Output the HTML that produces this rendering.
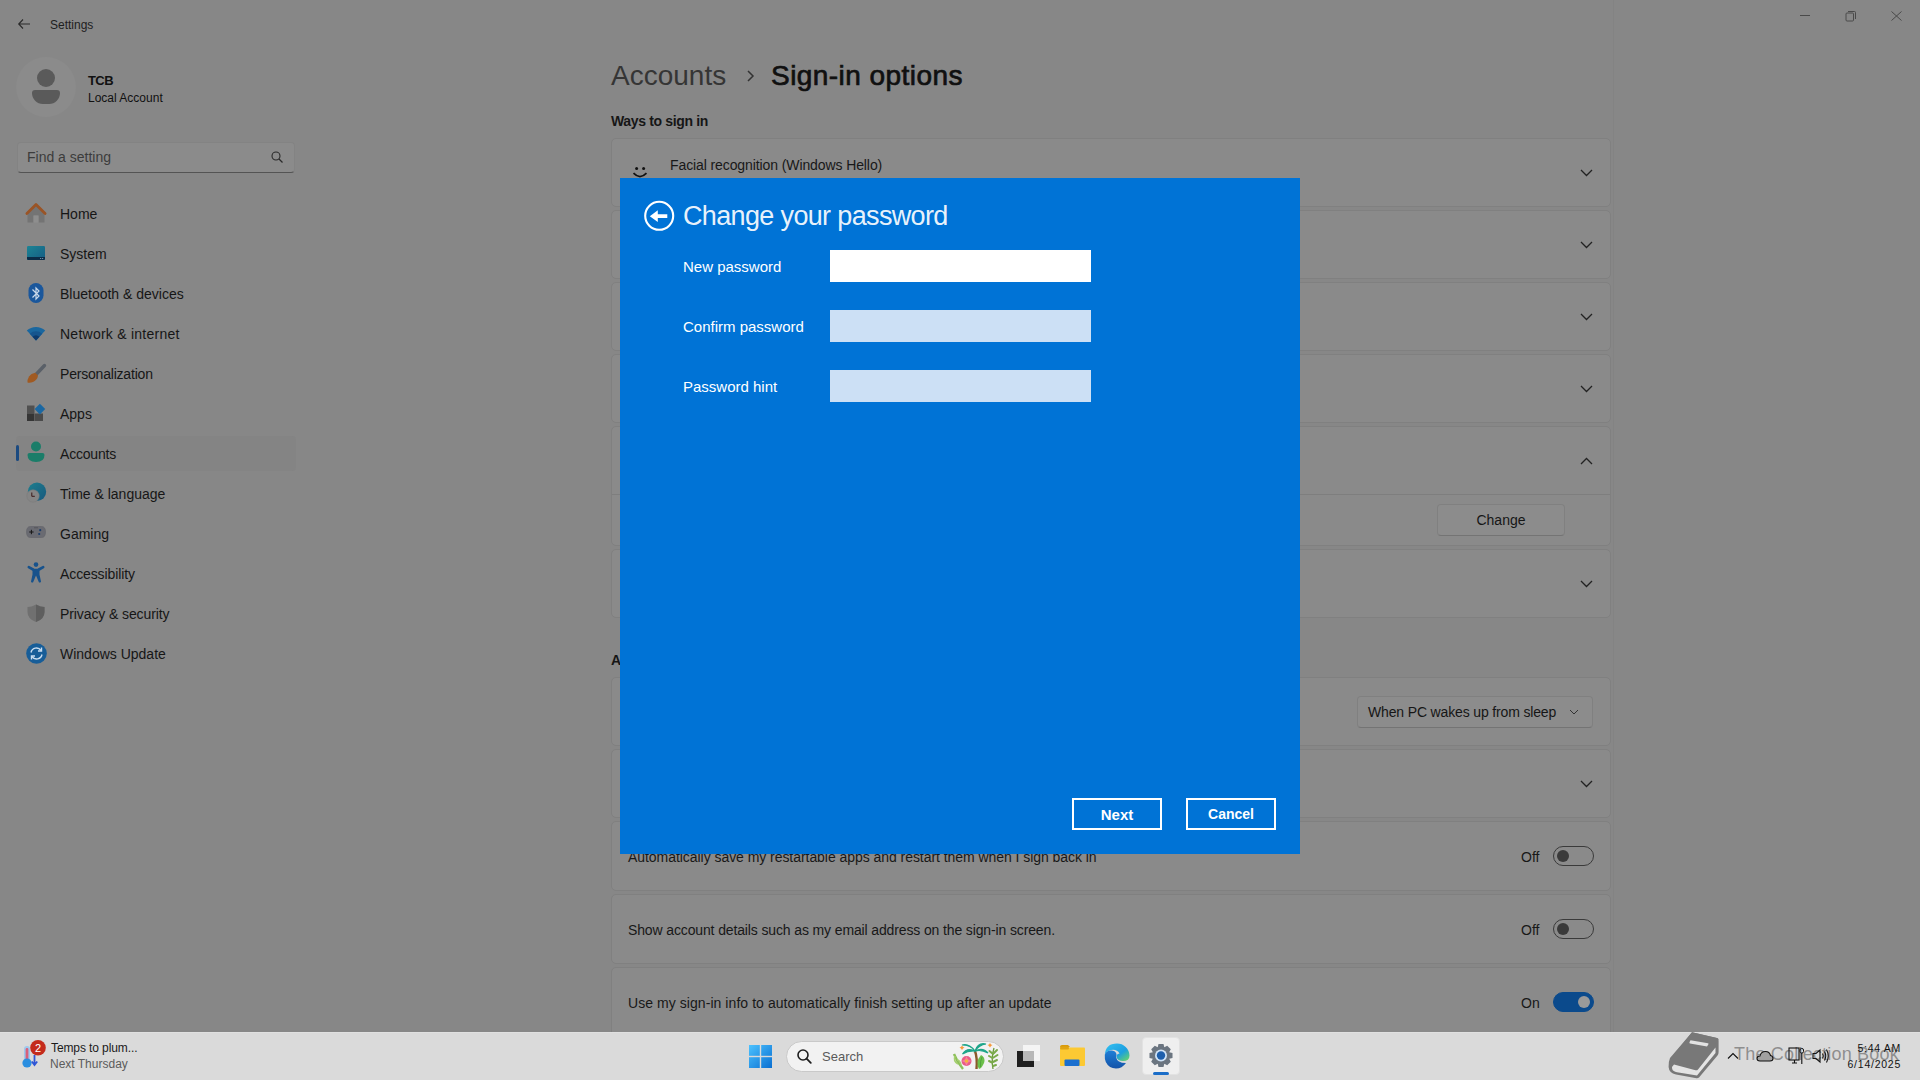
<!DOCTYPE html>
<html><head><meta charset="utf-8">
<style>
*{margin:0;padding:0;box-sizing:border-box}
html,body{width:1920px;height:1080px;overflow:hidden}
body{background:#878787;font-family:"Liberation Sans",sans-serif;color:#1a1a1a;position:relative}
.a{position:absolute;white-space:nowrap}
svg.a{overflow:visible}
.nav{position:absolute;left:60px;font-size:14px;color:#161616;white-space:nowrap}
.card{position:absolute;left:611px;width:1000px;background:#8a8a8a;border:1px solid #808080;border-radius:5px}
.ctext{position:absolute;left:628px;font-size:14px;color:#181818;white-space:nowrap}
.tog{position:absolute;left:1553px;width:41px;height:20px;border-radius:10px;border:1px solid #3a3a3a}
.tog i{position:absolute;left:3px;top:3px;width:12px;height:12px;border-radius:6px;background:#3a3a3a}
.offt{position:absolute;left:1521px;font-size:14px;color:#181818}
#dlg{position:absolute;left:620px;top:178px;width:680px;height:676px;background:#0073d6}
.lbl{position:absolute;left:63px;font-size:15px;color:#fff;white-space:nowrap}
.inp{position:absolute;left:210px;width:261px;height:32px;background:#cce0f5}
.btn{position:absolute;top:620px;width:90px;height:32px;border:2px solid #fff;color:#fff;font-size:15px;font-weight:bold;text-align:center;line-height:29.5px}
#tb{position:absolute;left:0;top:1032px;width:1920px;height:48px;background:#dadada;border-top:1px solid #e0e0e0}
</style></head><body>
<!-- title bar -->
<svg class="a" style="left:18px;top:19px" width="12" height="10" viewBox="0 0 12 10"><path d="M5 0.5L0.7 5L5 9.5M0.7 5H12" stroke="#2a2a2a" stroke-width="1.1" fill="none"/></svg>
<div class="a" style="left:50px;top:18px;font-size:12px;color:#1e1e1e">Settings</div>
<div class="a" style="left:1800px;top:15px;width:10px;height:1px;background:#4a4a4a"></div>
<svg class="a" style="left:1845px;top:10px" width="12" height="12"><rect x="1" y="3" width="7.5" height="8" rx="1" stroke="#4a4a4a" stroke-width="1" fill="none"/><path d="M3 1.5H9.5Q10.5 1.5 10.5 2.5V9" stroke="#4a4a4a" stroke-width="1" fill="none"/></svg>
<svg class="a" style="left:1891px;top:11px" width="11" height="10"><path d="M0.5 0.5L10.5 9.5M10.5 0.5L0.5 9.5" stroke="#4a4a4a" stroke-width="1" fill="none"/></svg>

<!-- profile -->
<div class="a" style="left:16px;top:57px;width:60px;height:60px;border-radius:30px;background:#8b8b8b"></div>
<div class="a" style="left:37px;top:69px;width:18px;height:18px;border-radius:9px;background:#5a5a5a"></div>
<div class="a" style="left:32px;top:90px;width:28px;height:14px;border-radius:4px 4px 14px 14px;background:#5a5a5a"></div>
<div class="a" style="left:88px;top:73px;font-size:13px;font-weight:bold;color:#111;letter-spacing:-0.6px">TCB</div>
<div class="a" style="left:88px;top:91px;font-size:12px;color:#111">Local Account</div>

<!-- search -->
<div class="a" style="left:17px;top:142px;width:278px;height:31px;background:#8b8b8b;border:1px solid #838383;border-bottom:1px solid #545454;border-radius:4px"></div>
<div class="a" style="left:27px;top:149px;font-size:14px;color:#3c3c3c">Find a setting</div>
<svg class="a" style="left:271px;top:151px" width="12" height="12"><circle cx="5" cy="5" r="4" stroke="#2a2a2a" stroke-width="1.1" fill="none"/><path d="M8 8L11.5 11.5" stroke="#2a2a2a" stroke-width="1.2"/></svg>

<!-- nav -->
<div class="a" style="left:16px;top:436px;width:280px;height:35px;background:#848484;border-radius:4px"></div>
<div class="a" style="left:16px;top:445px;width:3px;height:16px;background:#1b4a80;border-radius:2px"></div>
<!-- icons -->
<svg class="a" style="left:26px;top:202px" width="20" height="21" viewBox="0 0 20 21"><path d="M1.5 11L10 3.5L18.5 11V20.5H12.5V13.5H7.5V20.5H1.5Z" fill="#747474"/><path d="M7.5 13.5H12.5V20.5H7.5Z" fill="#8e8e8e"/><path d="M0.9 11.6L10 2.6L19.1 11.6" stroke="#9a5426" stroke-width="2.8" fill="none" stroke-linejoin="round" stroke-linecap="round"/></svg>
<svg class="a" style="left:27px;top:246px" width="18" height="14" viewBox="0 0 18 14"><defs><linearGradient id="sg" x1="0" y1="0" x2="1" y2="1"><stop offset="0" stop-color="#1c8494"/><stop offset="1" stop-color="#155c84"/></linearGradient></defs><rect x="0" y="0" width="18" height="14" rx="1.2" fill="url(#sg)"/><path d="M0 11H18V12.8Q18 14 16.8 14H1.2Q0 14 0 12.8Z" fill="#0b2c48"/><rect x="13" y="12" width="1.2" height="0.9" fill="#7a9ab0"/><rect x="15" y="12" width="1.2" height="0.9" fill="#7a9ab0"/></svg>
<svg class="a" style="left:28px;top:283px" width="16" height="21" viewBox="0 0 16 21"><rect x="0.5" y="0" width="15" height="20" rx="7.5" fill="#1a579c"/><path d="M4.5 6.5L11 13L8 16V5L11 8L4.5 14.5" stroke="#c8d8ea" stroke-width="1.2" fill="none"/></svg>
<svg class="a" style="left:26px;top:326px" width="20" height="15" viewBox="0 0 20 15"><path d="M0.8 4.5A13.5 13.5 0 0 1 19.2 4.5L10 14.5Z" fill="#1a679f"/><path d="M3.8 7.8A9 9 0 0 1 16.2 7.8L10 14.5Z" fill="#16558e"/><path d="M6.5 10.8A5.2 5.2 0 0 1 13.5 10.8L10 14.5Z" fill="#0e3a6c"/></svg>
<svg class="a" style="left:26px;top:363px" width="20" height="21" viewBox="0 0 20 21"><path d="M18.5 2.5L10 11.5" stroke="#5a6068" stroke-width="3.4" stroke-linecap="round"/><path d="M9.2 9.8L12 12.6Q11.5 17 7 19Q4 20.2 1.5 19.5Q1.2 16.5 3 13.5Q5 10.5 9.2 9.8Z" fill="#a05a22"/></svg>
<svg class="a" style="left:27px;top:405px" width="18" height="17" viewBox="0 0 18 17"><rect x="0" y="0.5" width="7.5" height="8" fill="#505050"/><rect x="0" y="8.5" width="7.5" height="7.5" fill="#353535"/><rect x="8" y="8.5" width="8" height="7.5" fill="#4a4a4a"/><path d="M12.9 -1.2L18.2 4.1L12.9 9.4L7.6 4.1Z" fill="#1a67a2"/></svg>
<svg class="a" style="left:27px;top:441px" width="18" height="22" viewBox="0 0 18 22"><circle cx="9" cy="5.5" r="5" fill="#1b7d69"/><path d="M0.5 14Q0.5 12 2.5 12H15.5Q17.5 12 17.5 14Q17.5 21 9 21Q0.5 21 0.5 14Z" fill="#1b7d69"/></svg>
<svg class="a" style="left:26px;top:482px" width="20" height="21" viewBox="0 0 20 21"><defs><linearGradient id="tg" x1="0" y1="0" x2="1" y2="1"><stop offset="0" stop-color="#1d7f8e"/><stop offset="1" stop-color="#19587e"/></linearGradient></defs><circle cx="11" cy="9.8" r="9.2" fill="url(#tg)"/><circle cx="7" cy="14" r="6.2" fill="#858585" stroke="#7a7a7a" stroke-width="0.6"/><path d="M5.8 10.5V14.3H8.8" stroke="#3a1818" stroke-width="1" fill="none"/></svg>
<svg class="a" style="left:26px;top:525px" width="20" height="14" viewBox="0 0 20 14"><path d="M4.5 1.5H15.5Q19.5 1.5 19.5 7Q19.5 12.5 15.5 12.5H4.5Q0.5 12.5 0.5 7Q0.5 1.5 4.5 1.5Z" fill="#6a6b72" stroke="#626268" stroke-width="0.6"/><path d="M3.2 7H7.6M5.4 4.8V9.2" stroke="#161616" stroke-width="1"/><circle cx="14.2" cy="5.2" r="1.1" fill="#1c3d6a"/><circle cx="13.2" cy="9" r="1.1" fill="#1c3d6a"/><circle cx="9" cy="2.8" r="0.5" fill="#333"/><circle cx="11" cy="2.8" r="0.5" fill="#333"/></svg>
<svg class="a" style="left:27px;top:562px" width="18" height="21" viewBox="0 0 18 21"><circle cx="9" cy="2.6" r="2.3" fill="#17528c"/><path d="M1.8 5.2L6 7.5M16.2 5.2L12 7.5" stroke="#17528c" stroke-width="2.6" stroke-linecap="round"/><path d="M5.5 6.8H12.5V12.5L14 19.5Q14 20.5 13 20.5H12L9 13.5L6 20.5H5Q4 20.5 4 19.5L5.5 12.5Z" fill="#17528c"/></svg>
<svg class="a" style="left:27px;top:604px" width="18" height="18" viewBox="0 0 18 18"><path d="M9 0.5Q4.5 3 0.5 3V8Q0.5 15 9 18Q17.5 15 17.5 8V3Q13.5 3 9 0.5Z" fill="#707070"/><path d="M9 0.5V18Q17.5 15 17.5 8V3Q13.5 3 9 0.5Z" fill="#5e5e5e"/></svg>
<svg class="a" style="left:26px;top:643px" width="21" height="21" viewBox="0 0 21 21"><circle cx="10.5" cy="10.5" r="10.3" fill="#175d98"/><path d="M5 9.5A5.5 5.5 0 0 1 15 7.5M16 11.5A5.5 5.5 0 0 1 6 13.5" stroke="#c8dcef" stroke-width="1.4" fill="none"/><path d="M15.5 4.5V8H12" stroke="#c8dcef" stroke-width="1.4" fill="none"/><path d="M5.5 16.5V13H9" stroke="#c8dcef" stroke-width="1.4" fill="none"/></svg>

<div class="nav" style="top:206px">Home</div>
<div class="nav" style="top:246px">System</div>
<div class="nav" style="top:286px">Bluetooth &amp; devices</div>
<div class="nav" style="top:326px;letter-spacing:0.25px">Network &amp; internet</div>
<div class="nav" style="top:366px;letter-spacing:-0.2px">Personalization</div>
<div class="nav" style="top:406px">Apps</div>
<div class="nav" style="top:446px;letter-spacing:-0.2px">Accounts</div>
<div class="nav" style="top:486px">Time &amp; language</div>
<div class="nav" style="top:526px">Gaming</div>
<div class="nav" style="top:566px;letter-spacing:-0.1px">Accessibility</div>
<div class="nav" style="top:606px;letter-spacing:-0.1px">Privacy &amp; security</div>
<div class="nav" style="top:646px">Windows Update</div>

<!-- main header -->
<div class="a" style="left:611px;top:60px;font-size:28px;color:#353535">Accounts</div>
<svg class="a" style="left:746px;top:70px" width="9" height="12"><path d="M2 1L7 6L2 11" stroke="#333" stroke-width="1.5" fill="none"/></svg>
<div class="a" style="left:771px;top:60px;font-size:28px;color:#101010;-webkit-text-stroke:0.7px #101010;letter-spacing:0.45px">Sign-in options</div>
<div class="a" style="left:611px;top:113px;font-size:14px;font-weight:bold;color:#161616;letter-spacing:-0.35px">Ways to sign in</div>

<!-- cards -->
<div class="card" style="top:138px;height:69px"></div>
<div class="card" style="top:210px;height:69px"></div>
<div class="card" style="top:282px;height:69px"></div>
<div class="card" style="top:354px;height:69px"></div>
<div class="card" style="top:426px;height:120px"></div>
<div class="a" style="left:612px;top:494px;width:998px;height:1px;background:#7e7e7e"></div>
<div class="card" style="top:549px;height:69px"></div>
<div class="a" style="left:1613px;top:0;width:1px;height:1032px;background:#838383"></div>
<svg class="a" style="left:632px;top:165px" width="16" height="14"><circle cx="4.6" cy="3.4" r="1.5" fill="#111"/><circle cx="11.6" cy="3.4" r="1.5" fill="#111"/><path d="M1.5 8.2Q8 15 14.5 8.2" stroke="#111" stroke-width="1.7" fill="none"/></svg>
<div class="ctext" style="left:670px;top:157px;letter-spacing:-0.1px">Facial recognition (Windows Hello)</div>
<svg class="a" style="left:1580px;top:169px" width="13" height="8"><path d="M1 1L6.5 6.5L12 1" stroke="#222" stroke-width="1.3" fill="none"/></svg>
<svg class="a" style="left:1580px;top:241px" width="13" height="8"><path d="M1 1L6.5 6.5L12 1" stroke="#222" stroke-width="1.3" fill="none"/></svg>
<svg class="a" style="left:1580px;top:313px" width="13" height="8"><path d="M1 1L6.5 6.5L12 1" stroke="#222" stroke-width="1.3" fill="none"/></svg>
<svg class="a" style="left:1580px;top:385px" width="13" height="8"><path d="M1 1L6.5 6.5L12 1" stroke="#222" stroke-width="1.3" fill="none"/></svg>
<svg class="a" style="left:1580px;top:457px" width="13" height="8"><path d="M1 7L6.5 1.5L12 7" stroke="#222" stroke-width="1.3" fill="none"/></svg>
<svg class="a" style="left:1580px;top:580px" width="13" height="8"><path d="M1 1L6.5 6.5L12 1" stroke="#222" stroke-width="1.3" fill="none"/></svg>
<div class="a" style="left:1437px;top:504px;width:128px;height:32px;background:#8c8c8c;border:1px solid #808080;border-bottom-color:#747474;border-radius:4px"></div>
<div class="a" style="left:1437px;top:512px;width:128px;text-align:center;font-size:14px;color:#161616">Change</div>

<div class="a" style="left:611px;top:652px;font-size:14px;font-weight:bold;color:#161616">A</div>
<div class="card" style="top:677px;height:69px"></div>
<div class="card" style="top:749px;height:69px"></div>
<div class="card" style="top:821px;height:70px"></div>
<div class="card" style="top:894px;height:70px"></div>
<div class="card" style="top:967px;height:70px"></div>
<div class="a" style="left:1357px;top:696px;width:236px;height:32px;background:#8c8c8c;border:1px solid #808080;border-bottom-color:#747474;border-radius:4px"></div>
<div class="a" style="left:1368px;top:704px;font-size:14px;color:#161616;letter-spacing:-0.15px">When PC wakes up from sleep</div>
<svg class="a" style="left:1569px;top:709px" width="10" height="6"><path d="M1 1L5 5L9 1" stroke="#333" stroke-width="1" fill="none"/></svg>
<svg class="a" style="left:1580px;top:780px" width="13" height="8"><path d="M1 1L6.5 6.5L12 1" stroke="#222" stroke-width="1.3" fill="none"/></svg>
<div class="ctext" style="top:849px;letter-spacing:-0.05px">Automatically save my restartable apps and restart them when I sign back in</div>
<div class="ctext" style="top:922px;letter-spacing:-0.13px">Show account details such as my email address on the sign-in screen.</div>
<div class="ctext" style="top:995px;letter-spacing:0.06px">Use my sign-in info to automatically finish setting up after an update</div>
<div class="offt" style="top:849px">Off</div>
<div class="offt" style="top:922px">Off</div>
<div class="offt" style="top:995px">On</div>
<div class="tog" style="top:846px"><i></i></div>
<div class="tog" style="top:919px"><i></i></div>
<div class="tog" style="top:992px;background:#0b4a8c;border-color:#0b4a8c"><i style="left:24px;background:#9a9a9a"></i></div>

<!-- dialog -->
<div id="dlg">
  <svg class="a" style="left:23px;top:22px" width="32" height="32" viewBox="0 0 32 32"><circle cx="16.2" cy="15.8" r="14" stroke="#fff" stroke-width="2.1" fill="none"/><path d="M6.8 16.2L14.8 10.3V14.3H24.3V18.1H14.8V22.1Z" fill="#fff"/></svg>
  <div class="a" style="left:63px;top:23px;font-size:27px;color:rgba(255,255,255,0.93);letter-spacing:-0.65px">Change your password</div>
  <div class="lbl" style="top:80px">New password</div>
  <div class="lbl" style="top:140px">Confirm password</div>
  <div class="lbl" style="top:200px">Password hint</div>
  <div class="inp" style="top:72px;background:#fff"></div>
  <div class="inp" style="top:132px"></div>
  <div class="inp" style="top:192px"></div>
  <div class="btn" style="left:452px">Next</div>
  <div class="btn" style="left:566px;font-size:14px">Cancel</div>
</div>

<!-- taskbar -->
<div id="tb"></div>
<!-- widget -->
<svg class="a" style="left:20px;top:1040px" width="28" height="30" viewBox="0 0 28 30"><rect x="4" y="6" width="6" height="17" rx="3" fill="#9dc9ee"/><rect x="5.6" y="8" width="2.8" height="12" rx="1.4" fill="#d9607a"/><circle cx="7" cy="23" r="4.6" fill="#2a8ee0"/><path d="M14.5 15V24M11.8 21.5L14.5 25L17.2 21.5" stroke="#2f55d6" stroke-width="1.8" fill="none"/><circle cx="18" cy="7.8" r="7.8" fill="#c42b1c"/><text x="18" y="12" font-family="Liberation Sans" font-size="11" fill="#fff" text-anchor="middle">2</text></svg>
<div class="a" style="left:51px;top:1041px;font-size:12px;color:#1a1a1a;letter-spacing:-0.1px">Temps to plum...</div>
<div class="a" style="left:50px;top:1057px;font-size:12px;color:#5c5c5c">Next Thursday</div>
<!-- start -->
<svg class="a" style="left:749px;top:1045px" width="23" height="23" viewBox="0 0 23 23"><defs><linearGradient id="wg" gradientUnits="userSpaceOnUse" x1="0" y1="0" x2="23" y2="23"><stop offset="0" stop-color="#4cc2ff"/><stop offset="1" stop-color="#0a6fd1"/></linearGradient></defs><rect x="0" y="0" width="10.8" height="10.8" fill="url(#wg)"/><rect x="12.2" y="0" width="10.8" height="10.8" fill="url(#wg)"/><rect x="0" y="12.2" width="10.8" height="10.8" fill="url(#wg)"/><rect x="12.2" y="12.2" width="10.8" height="10.8" fill="url(#wg)"/></svg>
<!-- search pill -->
<div class="a" style="left:786px;top:1041px;width:218px;height:31px;border-radius:16px;background:#f2f2f2;border:1px solid #c9c9c9"></div>
<svg class="a" style="left:797px;top:1049px" width="15" height="15" viewBox="0 0 15 15"><circle cx="6" cy="6" r="5" stroke="#1e1e1e" stroke-width="1.6" fill="none"/><path d="M9.6 9.6L13.8 13.8" stroke="#1e1e1e" stroke-width="1.8" stroke-linecap="round"/></svg>
<div class="a" style="left:822px;top:1049px;font-size:13px;color:#5a5a5a">Search</div>
<svg class="a" style="left:951px;top:1042px" width="50" height="30" viewBox="0 0 50 30"><path d="M3 12Q6 20 12 27" stroke="#8cbf5a" stroke-width="2.4" fill="none"/><path d="M4 14Q2 19 7 22M6 18Q9 18 10 23" stroke="#a6cf70" stroke-width="1.6" fill="none"/><path d="M25.5 27Q26.5 16 24 9" stroke="#8a5a2a" stroke-width="2.4" fill="none"/><path d="M24 9Q16 5 11.5 12Q17 8.5 24 9Q18 1 11 3Q20 3 24 9Q27 0 35 2Q28 3 24 9Q32 5 37 11Q30 7 24 9Z" fill="#1ea58a" stroke="#1ea58a" stroke-width="1.2"/><circle cx="15.5" cy="19" r="5" fill="#ea5a86"/><path d="M15.5 14L17 17.5L20.5 19L17 20.5L15.5 24L14 20.5L10.5 19L14 17.5Z" fill="#f47fa0"/><circle cx="15.5" cy="19" r="1.8" fill="#f5b23a"/><path d="M28 27Q24 20 30 13Q37 17 30 26Z" fill="#6cc04a"/><path d="M29.5 25Q29 19 31 15" stroke="#4a9a3a" stroke-width="0.8" fill="none"/><path d="M42 27Q40 16 43 6" stroke="#6a9a3a" stroke-width="1.3" fill="none"/><path d="M38.5 9L42 12M38 14L41.5 16M38 19L41 20.5M46 8L43 11M46.5 13L42.5 15.5M46 18L42 20M45 23L42 24" stroke="#7aaa4a" stroke-width="2" stroke-linecap="round"/><path d="M10 5L11 3.5L12 5L13.5 5.5L12 6.5L11 8L10 6.5L8.5 5.5Z" fill="#f59a3a"/><path d="M38 2.5L39 1L40 2.5L41.5 3L40 4L39 5.5L38 4L36.5 3Z" fill="#f59a3a"/></svg>
<!-- task view -->
<svg class="a" style="left:1017px;top:1045px" width="23" height="22" viewBox="0 0 23 22"><rect x="6" y="0" width="17" height="16" fill="#f4f4f4"/><rect x="0" y="6" width="17" height="16" fill="#1f1f1f"/><rect x="6" y="6" width="11" height="10" fill="#b8b8b8"/></svg>
<!-- explorer -->
<svg class="a" style="left:1060px;top:1045px" width="25" height="21" viewBox="0 0 25 21"><path d="M0 2Q0 0 2 0H8L10 2H0Z" fill="#d99a0a"/><rect x="0" y="2.5" width="25" height="18.5" rx="1" fill="#fcc933"/><rect x="0" y="1.5" width="9" height="3" rx="1.5" fill="#e0a412"/><rect x="4.5" y="14.5" width="15" height="6.5" rx="1" fill="#1a6fcf"/></svg>
<!-- edge -->
<svg class="a" style="left:1104px;top:1043px" width="26" height="26" viewBox="0 0 26 26"><defs><linearGradient id="eg1" x1="0" y1="0" x2="1" y2="1"><stop offset="0" stop-color="#35c1f1"/><stop offset="0.6" stop-color="#1c9fe0"/><stop offset="1" stop-color="#6fdc5a"/></linearGradient><linearGradient id="eg2" x1="0" y1="0" x2="0" y2="1"><stop offset="0" stop-color="#1d7fd8"/><stop offset="1" stop-color="#1553a8"/></linearGradient></defs><path d="M13 0.5A12.5 12.5 0 0 1 25.5 12.5Q25.5 18 19 18Q13.5 18 12.5 14Q12 11 15.5 10.5Q13 6 7 7Q2 8 0.8 12Q1.5 0.5 13 0.5Z" fill="url(#eg1)"/><path d="M0.8 12Q2 7 8 7.5Q14 8.5 12 14Q13 20 22 20Q18 25.5 12 25.5Q5 25.5 1.8 19Q0.5 16 0.8 12Z" fill="url(#eg2)"/></svg>
<!-- settings active -->
<div class="a" style="left:1142px;top:1037px;width:38px;height:38px;border-radius:4px;background:#efefef;border:1px solid #e2e2e2"></div>
<svg class="a" style="left:1149px;top:1044px" width="24" height="23" viewBox="0 0 24 23"><path d="M9.5 0H14.5L15.3 3.3L18.2 1.7L21.8 5.3L20.2 8.2L23.5 9V14L20.2 14.8L21.8 17.7L18.2 21.3L15.3 19.7L14.5 23H9.5L8.7 19.7L5.8 21.3L2.2 17.7L3.8 14.8L0.5 14V9L3.8 8.2L2.2 5.3L5.8 1.7L8.7 3.3Z" fill="#6b7580"/><circle cx="12" cy="11.5" r="6" fill="#cfe3f7"/><circle cx="12" cy="11.5" r="4.2" fill="#1d5fad"/></svg>
<div class="a" style="left:1153px;top:1072px;width:16px;height:3px;border-radius:2px;background:#1a6dc8"></div>
<!-- watermark -->
<svg class="a" style="left:1668px;top:1032px" width="52" height="47" viewBox="0 0 52 47"><path d="M24 0.3L49 6Q51 6.8 50.6 9L50.6 20Q50.6 22 49.5 23.5L31 45.5Q30 46.5 28.5 46.3L8 42.5Q1 41 0.6 35Q0.3 30 2 26Z" fill="#787878"/><path d="M6 32.5Q3.5 34.5 4.2 37Q5 39.5 9 40.2L29 43.5L47.5 21V15.5L30 37.5Q29 38.6 27.5 38.3Z" fill="#e4e4e4"/><path d="M24 0.3L49.8 6.2Q51 6.8 50 8.2L30.5 34Q29.5 35 28 34.7L2 28Z" fill="#787878"/><path d="M22.5 8.2L40 11.3Q41 11.6 40.3 12.6L39 14.6L22 11.4Q21 11.2 21.6 10Z" fill="#e2e2e2"/></svg>
<div class="a" style="left:1734px;top:1044px;font-size:18px;color:rgba(128,128,128,0.85);letter-spacing:0.2px">The Collection Book</div>
<!-- tray -->
<svg class="a" style="left:1727px;top:1052px" width="12" height="7"><path d="M1 6.5L6 1.5L11 6.5" stroke="#111" stroke-width="1.1" fill="none"/></svg>
<svg class="a" style="left:1756px;top:1049px" width="18" height="13" viewBox="0 0 18 13"><path d="M4 12Q1 12 1 9.5Q1 7 4 7Q5 2.5 9.5 2.5Q13.5 2.5 14.5 6.5Q17 7 17 9.5Q17 12 14 12Z" fill="#a0a0a0" stroke="#111" stroke-width="1.1"/></svg>
<svg class="a" style="left:1788px;top:1047px" width="18" height="18" viewBox="0 0 18 18"><rect x="1" y="1" width="10" height="12" stroke="#111" stroke-width="1.1" fill="none"/><path d="M4 16H9M6.5 13V16" stroke="#111" stroke-width="1.1"/><rect x="12" y="1.5" width="3.5" height="4.5" rx="1.5" stroke="#111" stroke-width="1" fill="none"/><path d="M13.8 6V17" stroke="#111" stroke-width="1.1"/></svg>
<svg class="a" style="left:1812px;top:1048px" width="18" height="16" viewBox="0 0 18 16"><path d="M1 5.5H4L8 2V14L4 10.5H1Z" stroke="#111" stroke-width="1.1" fill="none"/><path d="M10.5 5.5Q12 8 10.5 10.5M12.5 3.5Q15 8 12.5 12.5M14.5 1.5Q18 8 14.5 14.5" stroke="#111" stroke-width="1.1" fill="none"/></svg>
<div class="a" style="left:1700px;width:201px;text-align:right;top:1042px;font-size:10.5px;color:#111;letter-spacing:0.7px">5:44 AM</div>
<div class="a" style="left:1700px;width:201px;text-align:right;top:1058px;font-size:10.5px;color:#111;letter-spacing:0.75px">6/14/2025</div>
</body></html>
